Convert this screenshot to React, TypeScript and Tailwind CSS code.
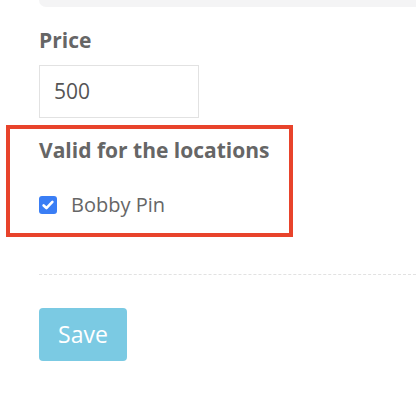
export default function App() {
  return (
    <div className="w-[416px] h-[400px] bg-white overflow-hidden font-['Open_Sans',sans-serif]">
      {/* previous section edge */}
      <div className="ml-[39px] h-[7px] rounded-bl-[10px] bg-[#f4f4f5]" />

      <div className="pl-[39px] pt-[21px]">
        <label className="block text-[21px] leading-[24px] font-bold text-[#666]">Price</label>
        <div className="mt-[13px] flex h-[53px] w-[160px] items-center border border-[#e2e2e2] px-[14px] text-[21px] text-[#555]">
          500
        </div>
      </div>

      <div className="ml-[6px] mt-[7px] h-[112px] w-[287px] border-4 border-[#e8432b] pl-[29px] pt-[9px]">
        <p className="text-[21px] leading-[24px] font-bold text-[#666]">Valid for the locations</p>
        <div className="mt-[31px] flex items-center gap-[14px]">
          <span className="flex h-[18px] w-[18px] items-center justify-center rounded-[3px] bg-[#3a7ef5]">
            <svg viewBox="0 0 16 16" className="h-[14px] w-[14px]" fill="none" stroke="white" strokeWidth="3" strokeLinecap="round" strokeLinejoin="round">
              <path d="M3 8.5l3.2 3L13 4.5" />
            </svg>
          </span>
          <span className="text-[20px] leading-[24px] text-[#666]">Bobby Pin</span>
        </div>
      </div>

      <div className="ml-[39px] mt-[37px] border-t border-dashed border-[#e2e2e2]" />

      <div className="pl-[39px] pt-[33px]">
        <button className="h-[53px] w-[88px] rounded-[4px] bg-[#7bcae3] text-[23px] text-white">Save</button>
      </div>
    </div>
  );
}
